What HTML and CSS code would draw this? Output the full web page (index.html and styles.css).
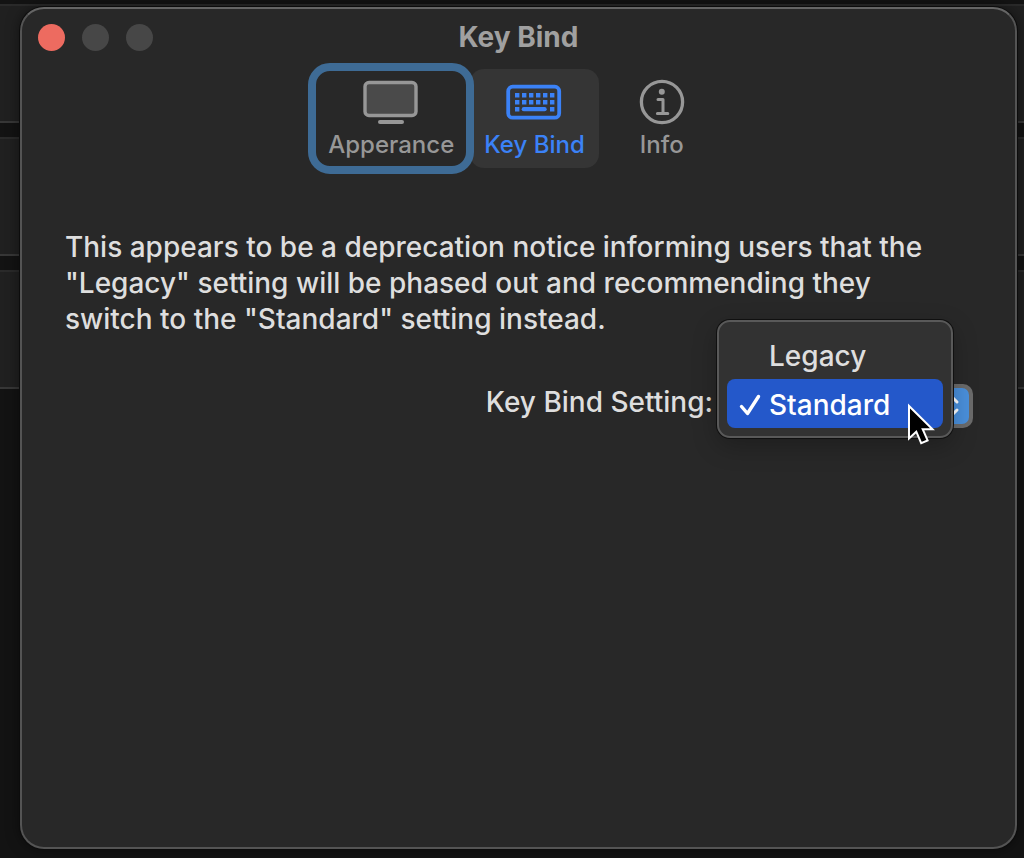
FILE: index.html
```html
<!DOCTYPE html>
<html lang="en">
<head>
  <meta charset="UTF-8" />
  <meta name="viewport" content="width=device-width, initial-scale=1" />
  <title>Key Bind</title>
  <link rel="stylesheet" href="styles.css">
</head>
<body>

  <!-- rows of the app behind the settings window -->
  <div class="backdrop" aria-hidden="true">
    <div class="row"></div>
    <div class="row"></div>
    <div class="row"></div>
  </div>

  <main class="window">

    <header class="titlebar">
      <div class="lights">
        <button class="light close" aria-label="Close"></button>
        <button class="light" aria-label="Minimize" disabled></button>
        <button class="light" aria-label="Zoom" disabled></button>
      </div>
      <h1>Key Bind</h1>
    </header>

    <nav class="tabs">
      <button class="tab focused">
        <svg width="56" height="46" viewBox="0 0 56 46">
          <rect x="2" y="3.5" width="51" height="33" rx="4" fill="#4a4a4a" stroke="currentColor" stroke-width="3.4"/>
          <path d="M17 43h22" stroke="currentColor" stroke-width="4" stroke-linecap="round"/>
        </svg>
        Apperance
      </button>
      <button class="tab active">
        <svg width="56" height="46" viewBox="0 0 56 46">
          <rect x="2.2" y="7.7" width="51" height="31" rx="4.5" fill="none" stroke="currentColor" stroke-width="3.8"/>
          <path d="M9 16.3h40M9 23.2h40" stroke="currentColor" stroke-width="4.4" stroke-dasharray="4.4 2.6"/>
          <path d="M9 30.2h4.4M44 30.2h4.4" stroke="currentColor" stroke-width="4.4"/>
          <path d="M17.8 30.2h20.8" stroke="currentColor" stroke-width="4.2" stroke-linecap="round"/>
        </svg>
        Key Bind
      </button>
      <button class="tab">
        <svg width="46" height="46" viewBox="0 0 46 46">
          <circle cx="23" cy="23" r="20.6" fill="none" stroke="currentColor" stroke-width="3.3"/>
          <circle cx="22.8" cy="12.8" r="3" fill="currentColor"/>
          <path d="M19 20.4h5v13.8M18.4 34.4h10.4" fill="none" stroke="currentColor" stroke-width="3" stroke-linecap="round" stroke-linejoin="round"/>
        </svg>
        Info
      </button>
    </nav>

    <section class="content">
      <p>This appears to be a deprecation notice informing users that the "Legacy" setting will be phased out and recommending they switch to the "Standard" setting instead.</p>

      <div class="field">
        <label for="keybind">Key Bind Setting:</label>
        <div class="popup">
          <select id="keybind">
            <option>Legacy</option>
            <option selected>Standard</option>
          </select>
          <span class="stepper">
            <svg width="18" height="26" viewBox="0 0 18 26">
              <path d="M3 9l6-6 6 6M3 17l6 6 6-6" fill="none" stroke="currentColor" stroke-width="3" stroke-linecap="round" stroke-linejoin="round"/>
            </svg>
          </span>

          <div class="menu" role="listbox" aria-label="Key Bind Setting">
            <button class="item" role="option" aria-selected="false">Legacy</button>
            <button class="item selected" role="option" aria-selected="true">
              <svg class="check" width="22" height="22" viewBox="0 0 22 22">
                <path d="M2.5 12.5l6 7L19.5 2.5" fill="none" stroke="currentColor" stroke-width="3.4" stroke-linecap="round" stroke-linejoin="round"/>
              </svg>
              Standard
            </button>
            <svg class="cursor" width="28" height="42" viewBox="0 0 28 42">
              <path d="M2 3v32.5l7.3-6.8 4.9 11.4 6.4-2.7-4.9-11.2h9.8z" fill="#000" stroke="#fff" stroke-width="2"/>
            </svg>
          </div>
        </div>
      </div>
    </section>

  </main>

</body>
</html>
```
FILE: styles.css
```css
:root {
  --window: #282828;
  --edge: #545454;
  --muted: #979797;
  --text: #dedede;
  --accent: #3b82f7;
  --selected: #2458ca;
  --ring: #3e6b95;
}

* {
  box-sizing: border-box;
}

body {
  margin: 0;
  min-height: 100vh;
  padding: 7px 7px 9px 20px;
  display: flex;
  background: #131313;
  color: var(--text);
  font-family: Inter, "Liberation Sans", sans-serif;
  font-size: 28px;
  font-weight: 500;
  line-height: 36px;
}

button,
select {
  font: inherit;
  color: inherit;
  border: none;
  padding: 0;
}

.backdrop {
  position: absolute;
  inset: 0;
  padding-top: 4px;
  display: flex;
  flex-direction: column;
  gap: 14px;
}

.row {
  height: 119px;
  background: #202020;
  border-top: 2px solid #2a2a2a;
  border-bottom: 2px solid #373737;
}

.window {
  position: relative;
  flex: 1;
  background: var(--window);
  border: 2px solid var(--edge);
  border-top-color: #656565;
  border-radius: 24px;
  box-shadow: 0 0 0 1px #0c0c0c, 0 0 14px rgba(0, 0, 0, 0.5);
}

.titlebar {
  display: grid;
  grid-template-columns: 1fr auto 1fr;
  align-items: center;
  padding: 10px 16px;
}

.lights {
  display: flex;
  gap: 17px;
}

.light {
  width: 27px;
  height: 27px;
  border-radius: 50%;
  background: #474747;
}

.light.close {
  background: #ed6b60;
}

h1 {
  margin: 0;
  font-size: 28px;
  font-weight: 700;
  color: #a0a0a0;
}

.tabs {
  display: flex;
  justify-content: center;
  gap: 2px;
  padding-top: 4px;
}

.tab {
  display: flex;
  flex-direction: column;
  align-items: center;
  gap: 5px;
  min-width: 122px;
  padding: 10px 14px 8px;
  border-radius: 14px;
  background: none;
  color: var(--muted);
  font-size: 24px;
  line-height: 30px;
}

.tab.active {
  background: #353535;
  color: var(--accent);
}

.tab.focused {
  z-index: 1;
  border-radius: 16px;
  outline: 8px solid var(--ring);
  outline-offset: -2px;
}

.content {
  padding: 61px 42px 42px 43px;
}

p {
  margin: 0;
  padding-right: 20px;
}

.field {
  display: flex;
  justify-content: flex-end;
  align-items: flex-start;
  gap: 8px;
  margin-top: 47px;
}

.popup {
  position: relative;
  width: 252px;
}

select {
  display: block;
  appearance: none;
  width: 100%;
  height: 44px;
  padding-left: 48px;
  border-radius: 10px;
  background: #6b6b6b;
}

.stepper {
  position: absolute;
  top: 4px;
  right: 4px;
  width: 36px;
  height: 36px;
  display: grid;
  place-items: center;
  border-radius: 7px;
  background: #4a90dc;
  color: #fff;
  pointer-events: none;
}

.menu {
  position: absolute;
  top: -64px;
  left: -4px;
  width: 236px;
  padding: 8px;
  border: 2px solid #595959;
  border-radius: 13px;
  background: #323232;
  box-shadow: 0 0 0 1px #101010, 0 8px 24px rgba(0, 0, 0, 0.25);
}

.item {
  position: relative;
  display: block;
  width: 100%;
  height: 49px;
  padding: 2px 0 0 42px;
  border-radius: 8px;
  background: none;
  text-align: left;
}

.item.selected {
  background: var(--selected);
  color: #fff;
}

.check {
  position: absolute;
  left: 12px;
  top: 15px;
}

.cursor {
  position: absolute;
  right: 16px;
  bottom: -9px;
}
```
